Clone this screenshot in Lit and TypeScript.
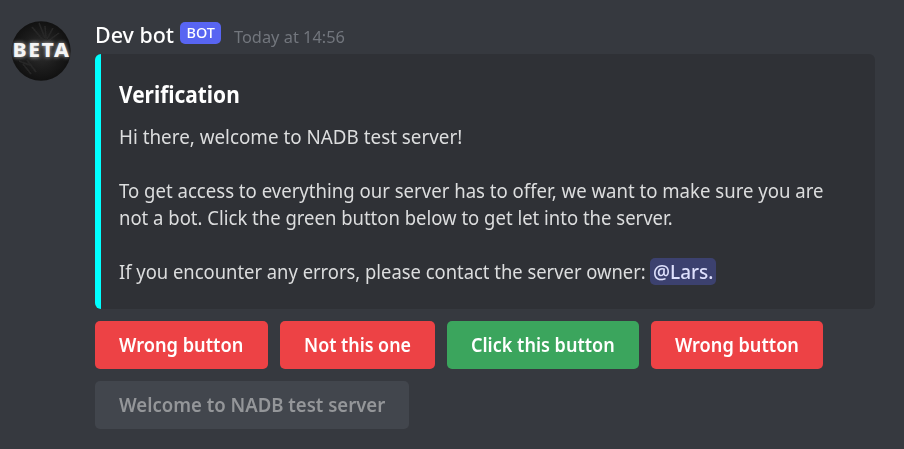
import { LitElement, html, css } from "lit";
import { customElement } from "lit/decorators.js";
import { styleMap } from "lit/directives/style-map.js";

// A run of text drawn with horizontally narrowed letters.
const narrow = (text: string, ratio: number) =>
  html`<span class="narrow" style=${styleMap({ transform: `scaleX(${ratio})` })}>${text}</span>`;

@customElement("app-root")
class AppRoot extends LitElement {
  static styles = css`
    :host {
      display: block;
      height: 449px;
      box-sizing: border-box;
      overflow: hidden;
      background: #36393f;
      font-family: "Noto Sans", "Open Sans", sans-serif;
      color: #dcddde;
    }
    .narrow { display: inline-block; transform-origin: 0 50%; white-space: pre; }
    .message { display: flex; }
    .avatar { flex: none; width: 60px; height: 60px; margin: 21px 24px 0 11px; }
    .avatar svg { display: block; }
    .content { width: 780px; }
    .header { display: flex; height: 54px; box-sizing: border-box; padding-top: 21px; white-space: nowrap; }
    .name { font-size: 22.5px; line-height: 28px; font-weight: 500; color: #fff; width: 85px; }
    .tag {
      width: 41px; height: 22px; margin-top: 1px; border-radius: 5px; background: #5865f2;
      color: #fff; font-size: 15px; line-height: 21px; font-weight: 500; text-align: center;
    }
    .tag .narrow { transform-origin: 50% 50%; }
    .time { margin-left: 13px; font-size: 17px; line-height: 32px; color: #72767d; }
    .embed {
      height: 255px; box-sizing: border-box; border-left: 6px solid #00ffff; border-radius: 6px;
      background: #2f3136; padding: 24px 18px 0; white-space: nowrap;
    }
    .title { font-size: 22.5px; height: 32px; line-height: 34px; font-weight: 700; color: #fff; }
    .text { margin-top: 13px; font-size: 20.5px; line-height: 27px; }
    .line { display: flex; height: 27px; }
    .lead { width: 531px; }
    .mention {
      box-sizing: border-box; width: 66px; height: 27px; padding-left: 3px;
      background: #3c416f; color: #dee0fc; font-weight: 500; border-radius: 5px;
    }
    .row { display: flex; gap: 12px; margin-top: 12px; }
    .btn {
      height: 48px; border-radius: 5px; font-size: 20.5px; line-height: 47px; font-weight: 600;
      padding-left: 24px; box-sizing: border-box; color: #fff; white-space: nowrap;
    }
    .red { background: #ed4245; }
    .green { background: #3ba55d; }
    .grey { background: #42464d; color: #949699; }
    .w1 { width: 173px; }
    .w2 { width: 155px; }
    .w3 { width: 192px; }
    .w4 { width: 172px; }
    .w5 { width: 314px; }
    .logo { font-weight: 800; font-size: 20px; letter-spacing: 1.5px; }
  `;

  render() {
    return html`
      <div class="message">
        <div class="avatar">
          <svg width="60" height="60" viewBox="0 0 60 60">
            <defs>
              <radialGradient id="g"><stop offset="0" stop-color="#303030"/><stop offset="0.6" stop-color="#1c1c1c"/><stop offset="1" stop-color="#111"/></radialGradient>
              <filter id="b" x="-30%" y="-80%" width="160%" height="260%"><feGaussianBlur stdDeviation="2"/></filter>
              <filter id="s"><feGaussianBlur stdDeviation="0.7"/></filter>
              <clipPath id="c"><circle cx="30" cy="30" r="29.7"/></clipPath>
            </defs>
            <g clip-path="url(#c)">
              <rect width="60" height="60" fill="url(#g)"/>
              <path fill="none" stroke="#272727" stroke-width="1.5" filter="url(#s)"
                d="M28 2l6 15M34 5l1 12M42 7l-6 11M48 12l-11 8M21 6l10 12M12 43l8 10M8 40l13 5M16 39l9 12"/>
              <text class="logo" x="1.5" y="36" textLength="58" lengthAdjust="spacingAndGlyphs" fill="#bbb" filter="url(#b)">BETA</text>
              <text class="logo" x="1.5" y="36" textLength="58" lengthAdjust="spacingAndGlyphs" fill="#f4f4f4">BETA</text>
            </g>
          </svg>
        </div>
        <div class="content">
          <div class="header">
            <span class="name">${narrow("Dev bot", 0.953)}</span><span class="tag">${narrow("BOT", 0.96)}</span><span class="time">${narrow("Today at 14:56", 0.963)}</span>
          </div>
          <div class="embed">
            <div class="title">${narrow("Verification", 0.928)}</div>
            <div class="text">
              <div class="line">${narrow("Hi there, welcome to NADB test server!", 0.918)}</div>
              <div class="line"></div>
              <div class="line">${narrow("To get access to everything our server has to offer, we want to make sure you are", 0.906)}</div>
              <div class="line">${narrow("not a bot. Click the green button below to get let into the server.", 0.902)}</div>
              <div class="line"></div>
              <div class="line">
                <span class="lead">${narrow("If you encounter any errors, please contact the server owner:", 0.897)}</span>
                <span class="mention">${narrow("@Lars.", 0.925)}</span>
              </div>
            </div>
          </div>
          <div class="row">
            <div class="btn red w1">${narrow("Wrong button", 0.888)}</div>
            <div class="btn red w2">${narrow("Not this one", 0.87)}</div>
            <div class="btn green w3">${narrow("Click this button", 0.88)}</div>
            <div class="btn red w4">${narrow("Wrong button", 0.885)}</div>
          </div>
          <div class="row"><div class="btn grey w5">${narrow("Welcome to NADB test server", 0.905)}</div></div>
        </div>
      </div>
    `;
  }
}
